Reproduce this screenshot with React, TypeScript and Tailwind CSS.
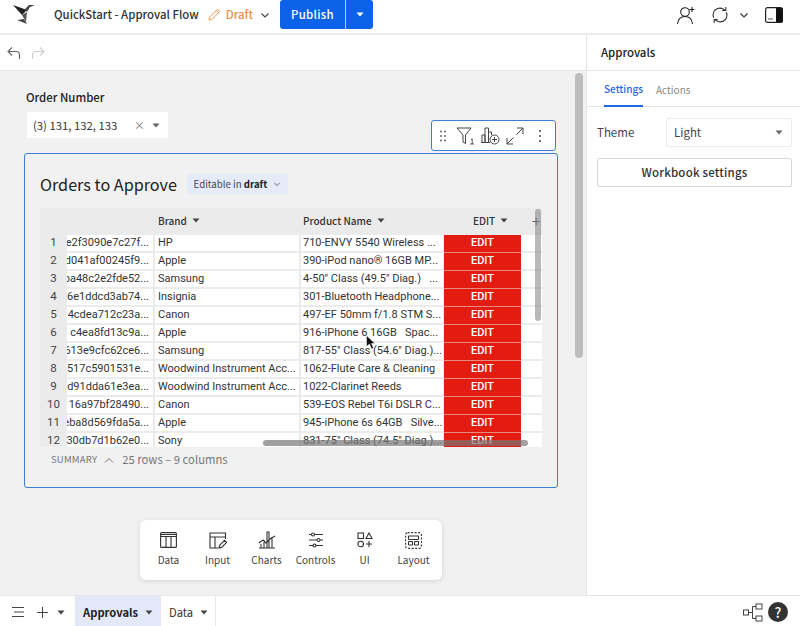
import React from "react";

const rows = [
  ["e2f3090e7c27f...", "HP", "710-ENVY 5540 Wireless ..."],
  ["d041af00245f9...", "Apple", "390-iPod nano® 16GB MP..."],
  ["ba48c2e2fde52...", "Samsung", "4-50\" Class (49.5\" Diag.)   ..."],
  ["6e1ddcd3ab74...", "Insignia", "301-Bluetooth Headphone..."],
  ["4cdea712c23a...", "Canon", "497-EF 50mm f/1.8 STM S..."],
  ["c4ea8fd13c9a...", "Apple", "916-iPhone 6 16GB   Spac..."],
  ["613e9cfc62ce6...", "Samsung", "817-55\" Class (54.6\" Diag.)..."],
  ["517c5901531e...", "Woodwind Instrument Acc...", "1062-Flute Care & Cleaning"],
  ["d91dda61e3ea...", "Woodwind Instrument Acc...", "1022-Clarinet Reeds"],
  ["16a97bf28490...", "Canon", "539-EOS Rebel T6i DSLR C..."],
  ["eba8d569fda5a...", "Apple", "945-iPhone 6s 64GB   Silve..."],
  ["30db7d1b62e0...", "Sony", "831-75\" Class (74.5\" Diag.)..."],
];

const Caret = ({ c = "#444" }: { c?: string }) => (
  <svg width="8" height="5" viewBox="0 0 8 5" className="shrink-0"><path d="M0.5 0.5h7L4 4.5z" fill={c} /></svg>
);
const Chev = ({ c = "#444", s = 10 }: { c?: string; s?: number }) => (
  <svg width={s} height={s} viewBox="0 0 10 10" fill="none" stroke={c} strokeWidth="1.2" className="shrink-0"><path d="M1.5 3.5 5 7l3.5-3.5" /></svg>
);
const I = ({ w = 22, h = 22, children, vb }: { w?: number; h?: number; children: React.ReactNode; vb?: string }) => (
  <svg width={w} height={h} viewBox={vb ?? `0 0 ${w} ${h}`} fill="none" stroke="#333" strokeWidth="1.1" className="shrink-0">{children}</svg>
);

function Tool({ label, children, w }: { label: string; children: React.ReactNode; w: string }) {
  return (
    <div className={`flex flex-col items-center ${w}`}>
      <div className="h-[20px] flex items-center justify-center">{children}</div>
      <div className="text-[10px] leading-[14px] mt-[3px] text-[#444] whitespace-nowrap">{label}</div>
    </div>
  );
}

export default function App() {
  return (
    <div className="w-[800px] h-[626px] flex flex-col overflow-hidden bg-white text-[#222] font-['Noto_Sans_CJK_SC',sans-serif]">
      {/* top bar */}
      <header className="h-[35px] shrink-0 flex items-center border-b-2 border-[#ececec] relative">
        <svg width="24" height="24" viewBox="0 0 24 24" className="ml-[12px] shrink-0 -mt-[4px]">
          <path d="M1 2l14 5-5 5z" fill="#222" />
          <path d="M13 6l4-4h6l-5 2-3 5z" fill="#444" />
          <path d="M10 12l5-3-1 10z" fill="#555" />
          <path d="M5 17l7-1 3 5z" fill="#444" />
        </svg>
        <span className="ml-[18px] text-[11.400px] font-medium text-[#333] whitespace-nowrap -mt-[4px]">QuickStart - Approval Flow</span>
        <svg width="13" height="13" viewBox="0 0 13 13" fill="none" stroke="#ef9a55" strokeWidth="1" className="ml-[9px] shrink-0 -mt-[4px]">
          <path d="M1 12l.7-3L9.500 1.200l2.300 2.300L4 11.300z M8.300 2.400l2.300 2.300" />
        </svg>
        <span className="ml-[5px] text-[11.400px] font-medium text-[#ef8f45] -mt-[4px]">Draft</span>
        <span className="ml-[7px] -mt-[4px]"><Chev /></span>
        <div className="absolute left-[280px] top-0 h-[29px] flex rounded-[3px] overflow-hidden text-white bg-[#0b62e9]">
          <div className="w-[65px] flex items-center justify-center text-[11.400px] font-medium tracking-[0.3px]">Publish</div>
          <div className="w-[28px] border-l border-white/70 flex items-center justify-center"><Caret c="#fff" /></div>
        </div>
        <div className="ml-auto flex items-center mr-[17px] -mt-[4px]">
          <svg width="20" height="20" viewBox="0 0 20 20" fill="none" stroke="#222" strokeWidth="1.100">
            <circle cx="9" cy="7" r="4.300" /><path d="M1.500 19c.5-5 3.500-7.500 7.500-7.500s7 2.500 7.500 7.500" /><path d="M16 2v5M13.500 4.500h5" />
          </svg>
          <svg width="18" height="18" viewBox="0 0 20 20" fill="none" stroke="#333" strokeWidth="1.200" className="ml-[15px]">
            <path d="M3 13a8 8 0 0 1 1-8c3-3 7-3 10-1.500l2 1.500M16.500 1v4h-4M17 7a8 8 0 0 1-1 8c-3 3-7 3-10 1.500L4 15M3.500 19v-4h4" />
          </svg>
          <span className="ml-[10px]"><Chev c="#333" /></span>
          <svg width="18" height="16" viewBox="0 0 18 16" className="ml-[16px]">
            <rect x="0.600" y="0.600" width="16.800" height="14.800" rx="2" fill="none" stroke="#222" strokeWidth="1.200" />
            <rect x="11" y="1" width="6.500" height="14" fill="#111" />
            <path d="M3 12h5" stroke="#555" />
          </svg>
        </div>
      </header>

      <div className="flex-1 flex min-h-0">
        {/* left */}
        <div className="w-[586px] shrink-0 flex flex-col">
          <div className="h-[36px] shrink-0 border-b border-[#e6e6e6] flex items-center pl-[7px] gap-[10px]">
            <svg width="14" height="14" viewBox="0 0 14 14" fill="none" stroke="#666" strokeWidth="1.100"><path d="M5 1.500 1 5.500l4 4M1 5.500h8c2 0 3.500 1.500 3.500 3.500v4" /></svg>
            <svg width="14" height="14" viewBox="0 0 14 14" fill="none" stroke="#ccc" strokeWidth="1.100"><path d="M9 1.500l4 4-4 4M13 5.500H5C3 5.500 1.500 7 1.500 9v4" /></svg>
          </div>
          <main className="flex-1 relative bg-[#f1f1f1] overflow-hidden pt-[18px]">
            <div className="ml-[26px] text-[11.400px] leading-[17px] font-medium text-[#222]">Order Number</div>
            <div className="ml-[27px] mt-[6px] w-[141px] h-[26px] bg-white flex items-center pl-[6px] pr-[8px] text-[11.300px] text-[#333]">
              <span>(3) 131, 132, 133</span>
              <span className="ml-auto text-[11px] text-[#777] leading-none">×</span>
              <span className="ml-[7px]"><Caret c="#666" /></span>
            </div>

            {/* card */}
            <section className="ml-[24px] mt-[15px] w-[534px] h-[335px] border-[1.5px] border-[#3d7ed6] rounded-[3px] pt-[19px] pl-[15px] flex flex-col">
              <div className="flex items-center h-[22px]">
                <h2 className="text-[16.200px] text-[#222] leading-[22px]">Orders to Approve</h2>
                <div className="ml-[10px] h-[20px] w-[101px] rounded-[2px] bg-[#e5ebf8] flex items-center justify-center gap-[6px] text-[9.700px] text-[#445]">
                  <span>Editable in <b className="font-semibold text-[#222]">draft</b></span>
                  <Chev c="#667" s={8} />
                </div>
              </div>

              {/* table */}
              <div className="relative mt-[13px] w-[502px] font-['Roboto',sans-serif]">
                <div className="flex h-[27px] pb-[3px] items-center bg-[#ebebeb] text-[10px] font-medium text-[#333] font-['Noto_Sans_CJK_SC',sans-serif]">
                  <div className="w-[118px] shrink-0" />
                  <div className="w-[145px] shrink-0 flex items-center gap-[5px]">Brand <Caret /></div>
                  <div className="w-[142px] shrink-0 flex items-center gap-[5px]">Product Name <Caret /></div>
                  <div className="w-[78px] shrink-0 flex items-center pl-[28px] gap-[5px]">EDIT <Caret /></div>
                  <div className="text-[15px] font-normal text-[#555] ml-[9px] leading-none">+</div>
                </div>
                <div className="h-[212px] overflow-hidden bg-[#ebebeb]">
                  {rows.map((r, i) => (
                    <div key={i} className="flex h-[18px] text-[11px] text-[#333] leading-[16px]">
                      <div className="w-[27px] shrink-0 text-center text-[#444] text-[11.500px] leading-[15px]">{i + 1}</div>
                      <div className="w-[86px] shrink-0 mr-[2px] bg-white border-b-2 border-[#ececec] overflow-hidden whitespace-nowrap pr-[4px] flex justify-end"><span>{r[0]}</span></div>
                      <div className="w-[144px] shrink-0 mr-[2px] bg-white border-b-2 border-[#ececec] pl-[3px] overflow-hidden whitespace-pre">{r[1]}</div>
                      <div className="w-[142px] shrink-0 mr-[1px] bg-white border-b-2 border-[#ececec] pl-[2px] overflow-hidden whitespace-pre">{r[2]}</div>
                      <div className="w-[77px] shrink-0 bg-[#e21c10] border-b border-[#e88a80] text-white font-medium text-center text-[11px] leading-[16px]">EDIT</div>
                      <div className="w-[22px] shrink-0 bg-white border-b-2 border-[#ececec]" />
                    </div>
                  ))}
                </div>
                {/* scrollbars */}
                <div className="absolute left-[495px] top-[1px] w-[6px] h-[112px] rounded-full bg-[#8a8a8a]/60" />
                <div className="absolute left-[223px] top-[232px] w-[265px] h-[6px] rounded-full bg-[#777]/70" />
              </div>
              <div className="h-[25px] flex items-center pl-[11px] text-[#777]">
                <span className="text-[9.500px] tracking-[0.2px]">SUMMARY</span>
                <svg width="10" height="6" viewBox="0 0 10 6" fill="none" stroke="#777" className="ml-[7px]"><path d="M1 5.500l4-4 4 4" /></svg>
                <span className="ml-[8px] text-[11.300px]">25 rows – 9 columns</span>
              </div>
            </section>

            {/* hover toolbar */}
            <div className="absolute left-[431px] top-[49px] w-[125px] h-[31px] bg-white border-[1.5px] border-[#3d7ed6] rounded-[3px] flex items-center pl-[8px]">
              <svg width="6" height="12" viewBox="0 0 6 12" fill="#555"><circle cx="1" cy="1.500" r=".9" /><circle cx="5" cy="1.500" r=".9" /><circle cx="1" cy="6" r=".9" /><circle cx="5" cy="6" r=".9" /><circle cx="1" cy="10.500" r=".9" /><circle cx="5" cy="10.500" r=".9" /></svg>
              <svg width="20" height="18" viewBox="0 0 20 18" fill="none" stroke="#444" strokeWidth="1" className="ml-[10px]"><path d="M1 1h14L9.500 8v8.500L7 15V8z" /><path d="M15 12.500l1.200-.7V17M14 17h4" strokeWidth=".9" /></svg>
              <svg width="19" height="18" viewBox="0 0 19 18" fill="none" stroke="#444" strokeWidth="1" className="ml-[5px]"><path d="M1 15V8h3v7M4 15V1h3.500v14M7.500 15V5h3v3M0 15.500h9" /><circle cx="13.500" cy="12.500" r="4.500" fill="#fff" /><path d="M13.500 10v5M11 12.500h5" /></svg>
              <svg width="18" height="18" viewBox="0 0 18 18" fill="none" stroke="#444" strokeWidth="1" className="ml-[6px]"><path d="M10.500 7.500 17 1M11 1h6v6M7.500 10.500 1 17M7 17H1v-6" /></svg>
              <svg width="4" height="14" viewBox="0 0 4 14" fill="#444" className="ml-[14px]"><circle cx="2" cy="2" r="1" /><circle cx="2" cy="7" r="1" /><circle cx="2" cy="12" r="1" /></svg>
            </div>

            {/* cursor */}
            <svg width="10" height="15" viewBox="0 0 10 15" className="absolute left-[366px] top-[264px]"><path d="M.5.500v11l3-2.500 2 5 2-1-2-4.500h3.500z" fill="#111" stroke="#fff" strokeWidth=".5" /></svg>

            {/* canvas scrollbar */}
            <div className="absolute left-[575px] top-[2px] w-[8px] h-[285px] rounded-full bg-[#bdbdbd]" />

            {/* add toolbar */}
            <div className="absolute left-[140px] top-[449px] w-[302px] h-[60px] bg-white rounded-[6px] shadow-[0_1px_5px_rgba(0,0,0,0.12)] flex items-start pt-[10px] pl-[4px]">
              <Tool label="Data" w="w-[49px]">
                <I w={17} h={16}><rect x=".6" y=".6" width="15.800" height="14.800" rx="1" /><path d="M.6 4.500h15.800M.6 2.500h15.800M6 4.500v11M11 4.500v11" /></I>
              </Tool>
              <Tool label="Input" w="w-[49px]">
                <I w={18} h={17}><path d="M16.500 7V1H1v15h8" /><path d="M1 5h15.500M6 5v11" /><path d="M10 16l.6-2.600 5-5 2 2-5 5z" /></I>
              </Tool>
              <Tool label="Charts" w="w-[49px]">
                <I w={18} h={18}><path d="M1 17h16M3 17v-4M6 17V9M9 17V1h2v16M14 17V6M1 12l4-3 3 3 4-4 5-3" /></I>
              </Tool>
              <Tool label="Controls" w="w-[49px]">
                <I w={16} h={16}><path d="M1 2.500h2.500M6.500 2.500H15M1 8h8M12 8h3M1 13.500h4M8 13.500h7" /><circle cx="5" cy="2.500" r="1.500" /><circle cx="10.500" cy="8" r="1.500" /><circle cx="6.500" cy="13.500" r="1.500" /></I>
              </Tool>
              <Tool label="UI" w="w-[49px]">
                <I w={16} h={16}><rect x="1" y="1" width="5.500" height="5.500" /><path d="M12 1l3 5.500H9z" /><circle cx="3.700" cy="12" r="2.800" /><path d="M12 9v6M9 12h6" /></I>
              </Tool>
              <Tool label="Layout" w="w-[49px]">
                <I w={17} h={17}><rect x=".6" y=".6" width="15.800" height="15.800" rx="2" strokeDasharray="2 1.500" /><rect x="3.500" y="4" width="10" height="3.500" rx=".5" /><rect x="3.500" y="9.500" width="4" height="3.500" rx=".5" /><rect x="9.500" y="9.500" width="4" height="3.500" rx=".5" /></I>
              </Tool>
            </div>
          </main>
        </div>

        {/* right panel */}
        <aside className="flex-1 border-l border-[#e6e6e6] flex flex-col">
          <div className="h-[36px] shrink-0 border-b border-[#e6e6e6] flex items-center pl-[14px] text-[11.400px] font-medium text-[#222]">Approvals</div>
          <div className="h-[36px] shrink-0 border-b border-[#e6e6e6] flex pl-[17px] gap-[13px] text-[10px]">
            <div className="h-[36px] flex items-center border-b-2 border-[#1f6ae0] text-[#1f6ae0] font-medium -mb-px">Settings</div>
            <div className="h-[36px] flex items-center text-[#888]">Actions</div>
          </div>
          <div className="flex items-center mt-[11px] pl-[10px]">
            <span className="text-[11.500px] text-[#444] w-[69px]">Theme</span>
            <div className="w-[126px] h-[29px] border border-[#ececec] rounded-[2px] flex items-center pl-[7px] pr-[8px] text-[11.500px] text-[#444]">
              Light<span className="ml-auto"><Caret c="#666" /></span>
            </div>
          </div>
          <div className="ml-[10px] mt-[11px] w-[195px] h-[29px] border border-[#d8d8d8] rounded-[2px] flex items-center justify-center text-[11.500px] font-medium text-[#333] tracking-[0.2px]">Workbook settings</div>
        </aside>
      </div>

      {/* bottom bar */}
      <footer className="h-[31px] shrink-0 border-t border-[#e6e6e6] flex items-stretch text-[11.200px] bg-white">
        <div className="flex items-center pl-[11px] w-[75px] pt-[2px]">
          <svg width="14" height="10" viewBox="0 0 14 10" stroke="#444" strokeWidth="1"><path d="M1 .5h12M3 5h10M1 9.500h12" /></svg>
          <svg width="11" height="11" viewBox="0 0 11 11" stroke="#444" strokeWidth="1" className="ml-[12px]"><path d="M5.500 0v11M0 5.500h11" /></svg>
          <span className="ml-[9px]"><Caret /></span>
        </div>
        <div className="w-[86px] bg-[#e3e9f8] flex items-center pl-[8px] gap-[7px] font-semibold text-[#222] pt-[2px]">Approvals <Caret /></div>
        <div className="w-[55px] flex items-center pl-[8px] gap-[7px] text-[#333] border-r border-[#e6e6e6] pt-[2px]">Data <Caret /></div>
        <div className="ml-auto flex items-center pr-[12px] pt-[2px]">
          <svg width="20" height="19" viewBox="0 0 20 19" fill="none" stroke="#444" strokeWidth="1"><rect x=".5" y="7" width="5" height="5" /><rect x="13" y="1" width="6" height="5" /><rect x="13" y="13" width="6" height="5" /><path d="M5.500 9.500h4M9.500 3.500v12M9.500 3.500H13M9.500 15.500H13" /></svg>
          <div className="ml-[5px] w-[20px] h-[20px] rounded-full bg-[#333] text-white flex items-center justify-center text-[14px] font-medium">?</div>
        </div>
      </footer>
    </div>
  );
}
